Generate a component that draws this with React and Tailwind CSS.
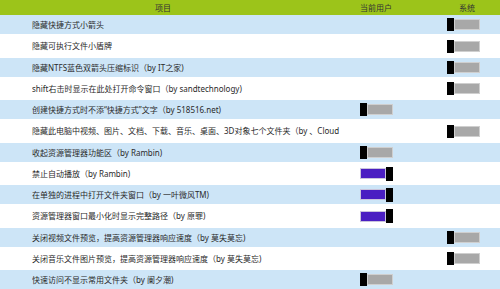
import React from 'react';

const rows = [
  { text: '隐藏快捷方式小箭头', sys: 'off' },
  { text: '隐藏可执行文件小盾牌', sys: 'off' },
  { text: '隐藏NTFS蓝色双箭头压缩标识（by IT之家)', sys: 'off' },
  { text: 'shift右击时显示在此处打开命令窗口（by sandtechnology)', sys: 'off' },
  { text: '创建快捷方式时不添“快捷方式”文字（by 518516.net)', user: 'off' },
  { text: '隐藏此电脑中视频、图片、文档、下载、音乐、桌面、3D对象七个文件夹（by 、Cloud', sys: 'off' },
  { text: '收起资源管理器功能区（by Rambin)', user: 'off' },
  { text: '禁止自动播放（by Rambin)', user: 'on' },
  { text: '在单独的进程中打开文件夹窗口（by 一叶微风TM)', user: 'on' },
  { text: '资源管理器窗口最小化时显示完整路径（by 原罪)', user: 'on' },
  { text: '关闭视频文件预览，提高资源管理器响应速度（by 莫失莫忘)', sys: 'off' },
  { text: '关闭音乐文件图片预览，提高资源管理器响应速度（by 莫失莫忘)', sys: 'off' },
  { text: '快速访问不显示常用文件夹（by 阑夕潮)', user: 'off' },
];

// white rows alternate 24/23 so the bands land where the original's do
const whiteH = ['h-[24px]', 'h-[23px]'];

const Toggle = ({ on }) =>
  on ? (
    <div className="flex items-center shrink-0">
      <div className="w-[26px] h-[11px] shrink-0 border border-[#c9c3dc] bg-[#4a1ec2]" />
      <div className="w-[7px] h-[14px] shrink-0 bg-black" />
    </div>
  ) : (
    <div className="flex items-center shrink-0">
      <div className="w-[7px] h-[13px] shrink-0 bg-black" />
      <div className="w-[26px] h-[11px] shrink-0 border border-[#cfcfcf] bg-[#a8a8a8]" />
    </div>
  );

export default function App() {
  let w = 0;
  return (
    <div className="w-[500px] h-[289px] overflow-hidden bg-white text-[8px] leading-[12px] text-[#2a2a2a] font-['Noto_Sans','Noto_Sans_CJK_SC',sans-serif]">
      <div className="grid grid-cols-[326px_100px_74px] h-[15px] items-center bg-[#9cc41a] text-[#333]">
        <div className="text-center">项目</div>
        <div className="text-center">当前用户</div>
        <div className="text-center pl-2">系统</div>
      </div>
      {rows.map((r, i) => {
        const blue = i % 2 === 0;
        const h = blue ? 'h-[19px] bg-[#cde5f7]' : `${whiteH[w++ % 2]} bg-white`;
        return (
          <div key={i} className={`grid grid-cols-[326px_100px_74px] items-center ${h}`}>
            <div className="pl-[32px] min-w-0">
              <div className="w-[324px] overflow-hidden whitespace-nowrap">{r.text}</div>
            </div>
            <div className="flex justify-center">{r.user && <Toggle on={r.user === 'on'} />}</div>
            <div className="flex justify-center">{r.sys && <Toggle on={r.sys === 'on'} />}</div>
          </div>
        );
      })}
    </div>
  );
}
